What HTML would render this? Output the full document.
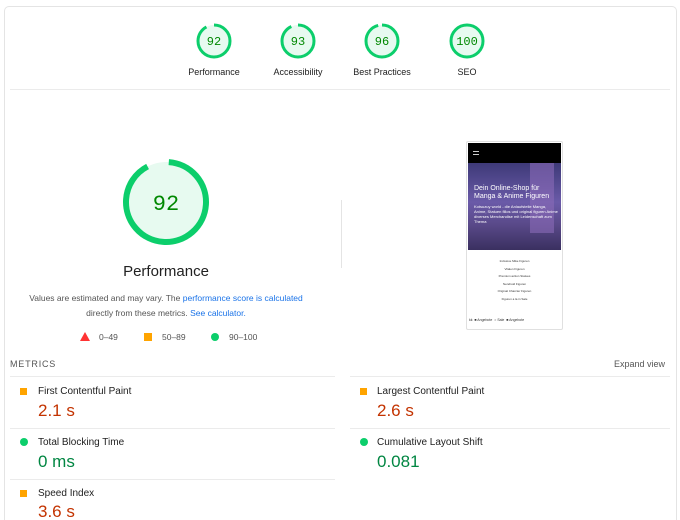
<!DOCTYPE html>
<html><head><meta charset="utf-8"><style>
*{margin:0;padding:0;box-sizing:border-box}
html,body{width:680px;height:520px;overflow:hidden}
body{background:#fff;font-family:"Liberation Sans",sans-serif;color:#212121;position:relative}
.card{position:absolute;left:4px;top:6px;width:673px;height:514px;border:1px solid #e4e4e4;border-bottom:none;border-radius:5px 5px 0 0}
.a{position:absolute}
.lbl{position:absolute;font-size:9px;width:100px;text-align:center;color:#212121}
.hr{position:absolute;height:1px;background:#ebebeb}
.sq{position:absolute;width:7px;height:7px;background:#ffa400}
.dot{position:absolute;width:8px;height:8px;border-radius:50%;background:#0cce6b}
.mlab{position:absolute;font-size:10px;color:#212121}
.mval{position:absolute;font-size:17px;line-height:16px}
.or{color:#c33300}.gr{color:#018642}
</style></head><body>
<div class="card"></div>
<svg class="a" style="left:0;top:0" width="680" height="520">
 <g fill="#e7faf0" stroke="#0cce6b" stroke-width="3">
  <circle cx="214" cy="41" r="16" stroke-dasharray="92.5 100" transform="rotate(-90 214 41)"/>
  <circle cx="298" cy="41" r="16" stroke-dasharray="93.5 100" transform="rotate(-90 298 41)"/>
  <circle cx="382" cy="41" r="16" stroke-dasharray="96.5 100" transform="rotate(-90 382 41)"/>
  <circle cx="467" cy="41" r="16"/>
 </g>
 <g font-family="Liberation Mono,monospace" font-size="12" fill="#008800" text-anchor="middle">
  <text x="214" y="45">92</text><text x="298" y="45">93</text><text x="382" y="45">96</text><text x="467" y="45">100</text>
 </g>
 <circle cx="166" cy="202" r="40" fill="#e7faf0" stroke="#0cce6b" stroke-width="6" stroke-dasharray="229 260" transform="rotate(-86 166 202)"/>
 <text x="166" y="210" font-family="Liberation Mono,monospace" font-size="22" fill="#008800" text-anchor="middle">92</text>
 <polygon points="85,332 90,341 80,341" fill="#ff3333"/>
 <rect x="144" y="333" width="8" height="8" fill="#ffa400"/>
 <circle cx="215" cy="337" r="4" fill="#0cce6b"/>
</svg>
<div class="lbl" style="left:164px;top:67px">Performance</div>
<div class="lbl" style="left:248px;top:67px">Accessibility</div>
<div class="lbl" style="left:332px;top:67px">Best Practices</div>
<div class="lbl" style="left:417px;top:67px">SEO</div>
<div class="hr" style="left:10px;top:89px;width:660px"></div>
<div class="a" style="left:66px;top:263px;width:200px;text-align:center;font-size:15px">Performance</div>
<div class="a" style="left:10px;top:291px;width:312px;text-align:center;font-size:8.5px;line-height:15px;color:#555">Values are estimated and may vary. The <span style="color:#1a73e8">performance score is calculated</span><br>directly from these metrics. <span style="color:#1a73e8">See calculator.</span></div>
<div class="a" style="left:99px;top:332px;font-size:8.5px;color:#555">0–49</div>
<div class="a" style="left:162px;top:332px;font-size:8.5px;color:#555">50–89</div>
<div class="a" style="left:229px;top:332px;font-size:8.5px;color:#555">90–100</div>
<div class="a" style="left:341px;top:200px;width:1px;height:68px;background:#e4e4e4"></div>
<div class="a" style="left:466px;top:141px;width:97px;height:189px;border:1px solid #e0e0e0;border-radius:2px;background:#fff"></div>
<div class="a" style="left:468px;top:143px;width:93px;height:20px;background:#000"></div>
<div class="a" style="left:473px;top:151px;width:6px;height:4px;border-top:1px solid #ccc;border-bottom:1px solid #ccc"></div>
<div class="a" style="left:468px;top:163px;width:93px;height:87px;background:linear-gradient(180deg,#3e3a78 0%,#6a5aa8 45%,#5a4a8a 70%,#3a3060 100%)"></div>
<div class="a" style="left:530px;top:163px;width:24px;height:70px;background:#8a6ab8;opacity:.6"></div>
<div class="a" style="left:474px;top:185px;font-size:7px;color:#fff;line-height:8px;width:85px">Dein Online-Shop für Manga &amp; Anime Figuren</div>
<div class="a" style="left:474px;top:204px;font-size:4px;color:#fff;line-height:5px;width:85px">Kotsuzuy world - die Anlaufstelle Manga, Anime, Statuen fillos und original figuren Anime diverses Merchandise mit Leidenschaft zum Thema</div>
<div class="a" style="left:468px;top:258px;width:93px;text-align:center;font-size:3px;line-height:7.5px;color:#333">Inclusive Mike Figuren<br>Vitalen Figuren<br>Premium action Statues<br>Nendroid Figuren<br>Original Charcter Figuren<br>Figuren a la in Sale</div>
<div class="a" style="left:468px;top:318px;width:93px;font-size:3.5px;color:#333;white-space:nowrap">&nbsp;kk &nbsp;■ Angebote &nbsp;○ Sale &nbsp;■ Angebote</div>
<div class="a" style="left:10px;top:359px;font-size:9px;letter-spacing:.8px;color:#555">METRICS</div>
<div class="a" style="left:614px;top:359px;font-size:9px;color:#555">Expand view</div>
<div class="hr" style="left:10px;top:376px;width:325px"></div>
<div class="hr" style="left:350px;top:376px;width:320px"></div>
<div class="hr" style="left:10px;top:428px;width:325px"></div>
<div class="hr" style="left:350px;top:428px;width:320px"></div>
<div class="hr" style="left:10px;top:479px;width:325px"></div>
<div class="sq" style="left:20px;top:388px"></div><div class="mlab" style="left:38px;top:386px">First Contentful Paint</div><div class="mval or" style="left:38px;top:403px">2.1 s</div>
<div class="sq" style="left:360px;top:388px"></div><div class="mlab" style="left:377px;top:386px">Largest Contentful Paint</div><div class="mval or" style="left:377px;top:403px">2.6 s</div>
<div class="dot" style="left:20px;top:438px"></div><div class="mlab" style="left:38px;top:437px">Total Blocking Time</div><div class="mval gr" style="left:38px;top:454px">0 ms</div>
<div class="dot" style="left:360px;top:438px"></div><div class="mlab" style="left:377px;top:437px">Cumulative Layout Shift</div><div class="mval gr" style="left:377px;top:454px">0.081</div>
<div class="sq" style="left:20px;top:490px"></div><div class="mlab" style="left:38px;top:488px">Speed Index</div><div class="mval or" style="left:38px;top:504px">3.6 s</div>
</body></html>
